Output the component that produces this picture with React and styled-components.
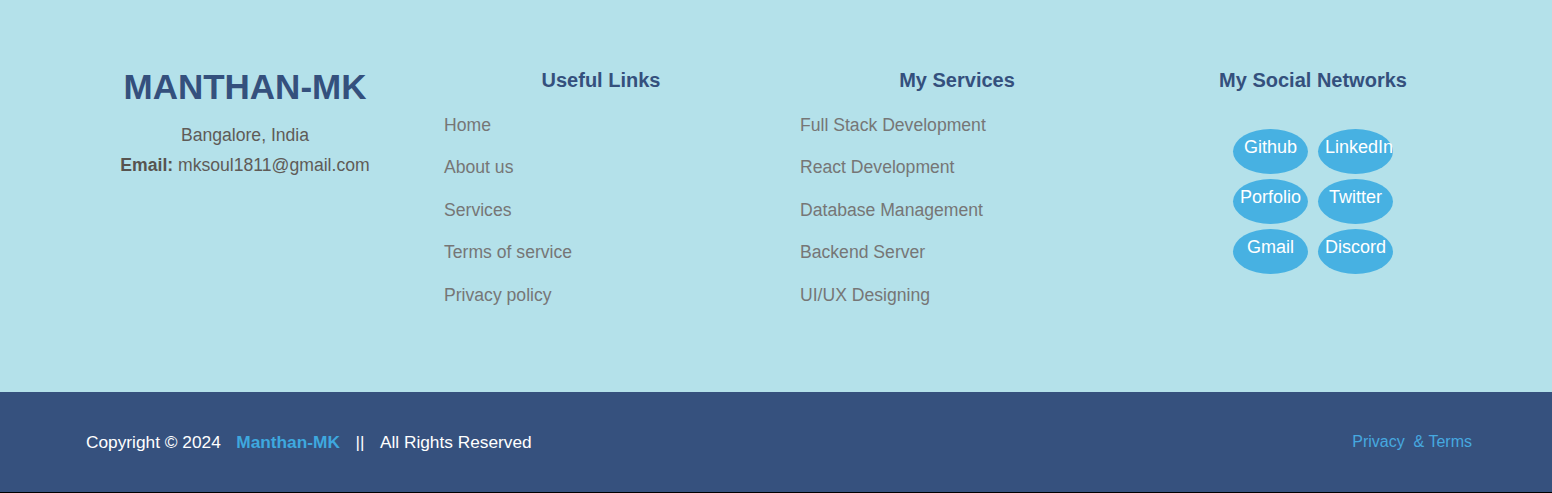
import React from "react";
import styled, { createGlobalStyle } from "styled-components";

const GlobalStyle = createGlobalStyle`
  html, body {
    margin: 0;
    padding: 0;
    font-family: "Liberation Sans", Arial, sans-serif;
  }
`;

const usefulLinks = ["Home", "About us", "Services", "Terms of service", "Privacy policy"];
const services = [
  "Full Stack Development",
  "React Development",
  "Database Management",
  "Backend Server",
  "UI/UX Designing"
];
const socials = ["Github", "LinkedIn", "Porfolio", "Twitter", "Gmail", "Discord"];

const App = () => {
  return (
    <>
      <GlobalStyle />
      <Footer>
        <TopSection>
          <BrandCol>
            <Brand>MANTHAN-MK</Brand>
            <Address>Bangalore, India</Address>
            <Address>
              <strong>Email:</strong> mksoul1811@gmail.com
            </Address>
          </BrandCol>
          <LinkCol>
            <ColTitle>Useful Links</ColTitle>
            <LinkList>
              {usefulLinks.map(l => (
                <li key={l}>
                  <LinkItem href="#">{l}</LinkItem>
                </li>
              ))}
            </LinkList>
          </LinkCol>
          <LinkCol>
            <ColTitle>My Services</ColTitle>
            <LinkList>
              {services.map(l => (
                <li key={l}>
                  <LinkItem href="#">{l}</LinkItem>
                </li>
              ))}
            </LinkList>
          </LinkCol>
          <LinkCol>
            <ColTitle>My Social Networks</ColTitle>
            <SocialGrid>
              {socials.map(s => (
                <SocialBubble key={s} href="#">
                  {s}
                </SocialBubble>
              ))}
            </SocialGrid>
          </LinkCol>
        </TopSection>
        <BottomBar>
          <Copy>
            <span>Copyright © 2024</span>
            <BrandLink>Manthan-MK</BrandLink>
            <span>||</span>
            <span>All Rights Reserved</span>
          </Copy>
          <Legal href="#">Privacy&nbsp; &amp; Terms</Legal>
        </BottomBar>
      </Footer>
    </>
  );
};

export default App;

//-----//

const Footer = styled.footer`
  display: flex;
  flex-direction: column;
  width: 100%;
  border-bottom: 1px solid #000;
`;

const TopSection = styled.div`
  display: grid;
  grid-template-columns: repeat(4, 1fr);
  background: #b4e1ea;
  padding: 64px 61px 0 67px;
  height: 392px;
  box-sizing: border-box;
`;

const BrandCol = styled.div`
  display: flex;
  flex-direction: column;
  align-items: center;
`;

const Brand = styled.h2`
  margin: 3px 0 13px;
  font-size: 35px;
  font-weight: 700;
  color: #34507d;
  line-height: 40px;
`;

const Address = styled.p`
  margin: 0;
  font-size: 17.6px;
  line-height: 30px;
  color: #5f5b57;

  strong {
    color: #57534f;
  }
`;

const LinkCol = styled.div`
  display: flex;
  flex-direction: column;
`;

const ColTitle = styled.h4`
  margin: 4px 0 0;
  text-align: center;
  font-size: 20px;
  font-weight: 700;
  line-height: 24px;
  color: #34507d;
`;

const LinkList = styled.ul`
  list-style: none;
  margin: 12px 0 0;
  padding: 0 0 0 21px;
  display: flex;
  flex-direction: column;

  li {
    height: 42.5px;
    display: flex;
    align-items: center;
  }
`;

const LinkItem = styled.a`
  font-size: 17.6px;
  color: #767676;
  text-decoration: none;
`;

const SocialGrid = styled.div`
  align-self: center;
  display: grid;
  grid-template-columns: repeat(2, 75px);
  column-gap: 10px;
  row-gap: 5px;
  margin-top: 37px;
`;

const SocialBubble = styled.a`
  display: block;
  width: 75px;
  height: 45px;
  padding: 7px 7px 0;
  box-sizing: border-box;
  border-radius: 50%;
  background: #47b1e2;
  color: #fff;
  font-size: 18px;
  line-height: 22px;
  text-align: center;
  text-decoration: none;
  white-space: nowrap;
`;

const BottomBar = styled.div`
  display: flex;
  justify-content: space-between;
  align-items: center;
  height: 100px;
  padding: 0 80px 0 86px;
  background: #36517e;
  box-sizing: border-box;
`;

const Copy = styled.div`
  display: flex;
  align-items: center;
  gap: 15.5px;
  color: #fff;
  font-size: 17.3px;
`;

const BrandLink = styled.span`
  color: #3ea8df;
  font-weight: 700;
`;

const Legal = styled.a`
  color: #46a9e0;
  font-size: 16px;
  text-decoration: none;
`;
